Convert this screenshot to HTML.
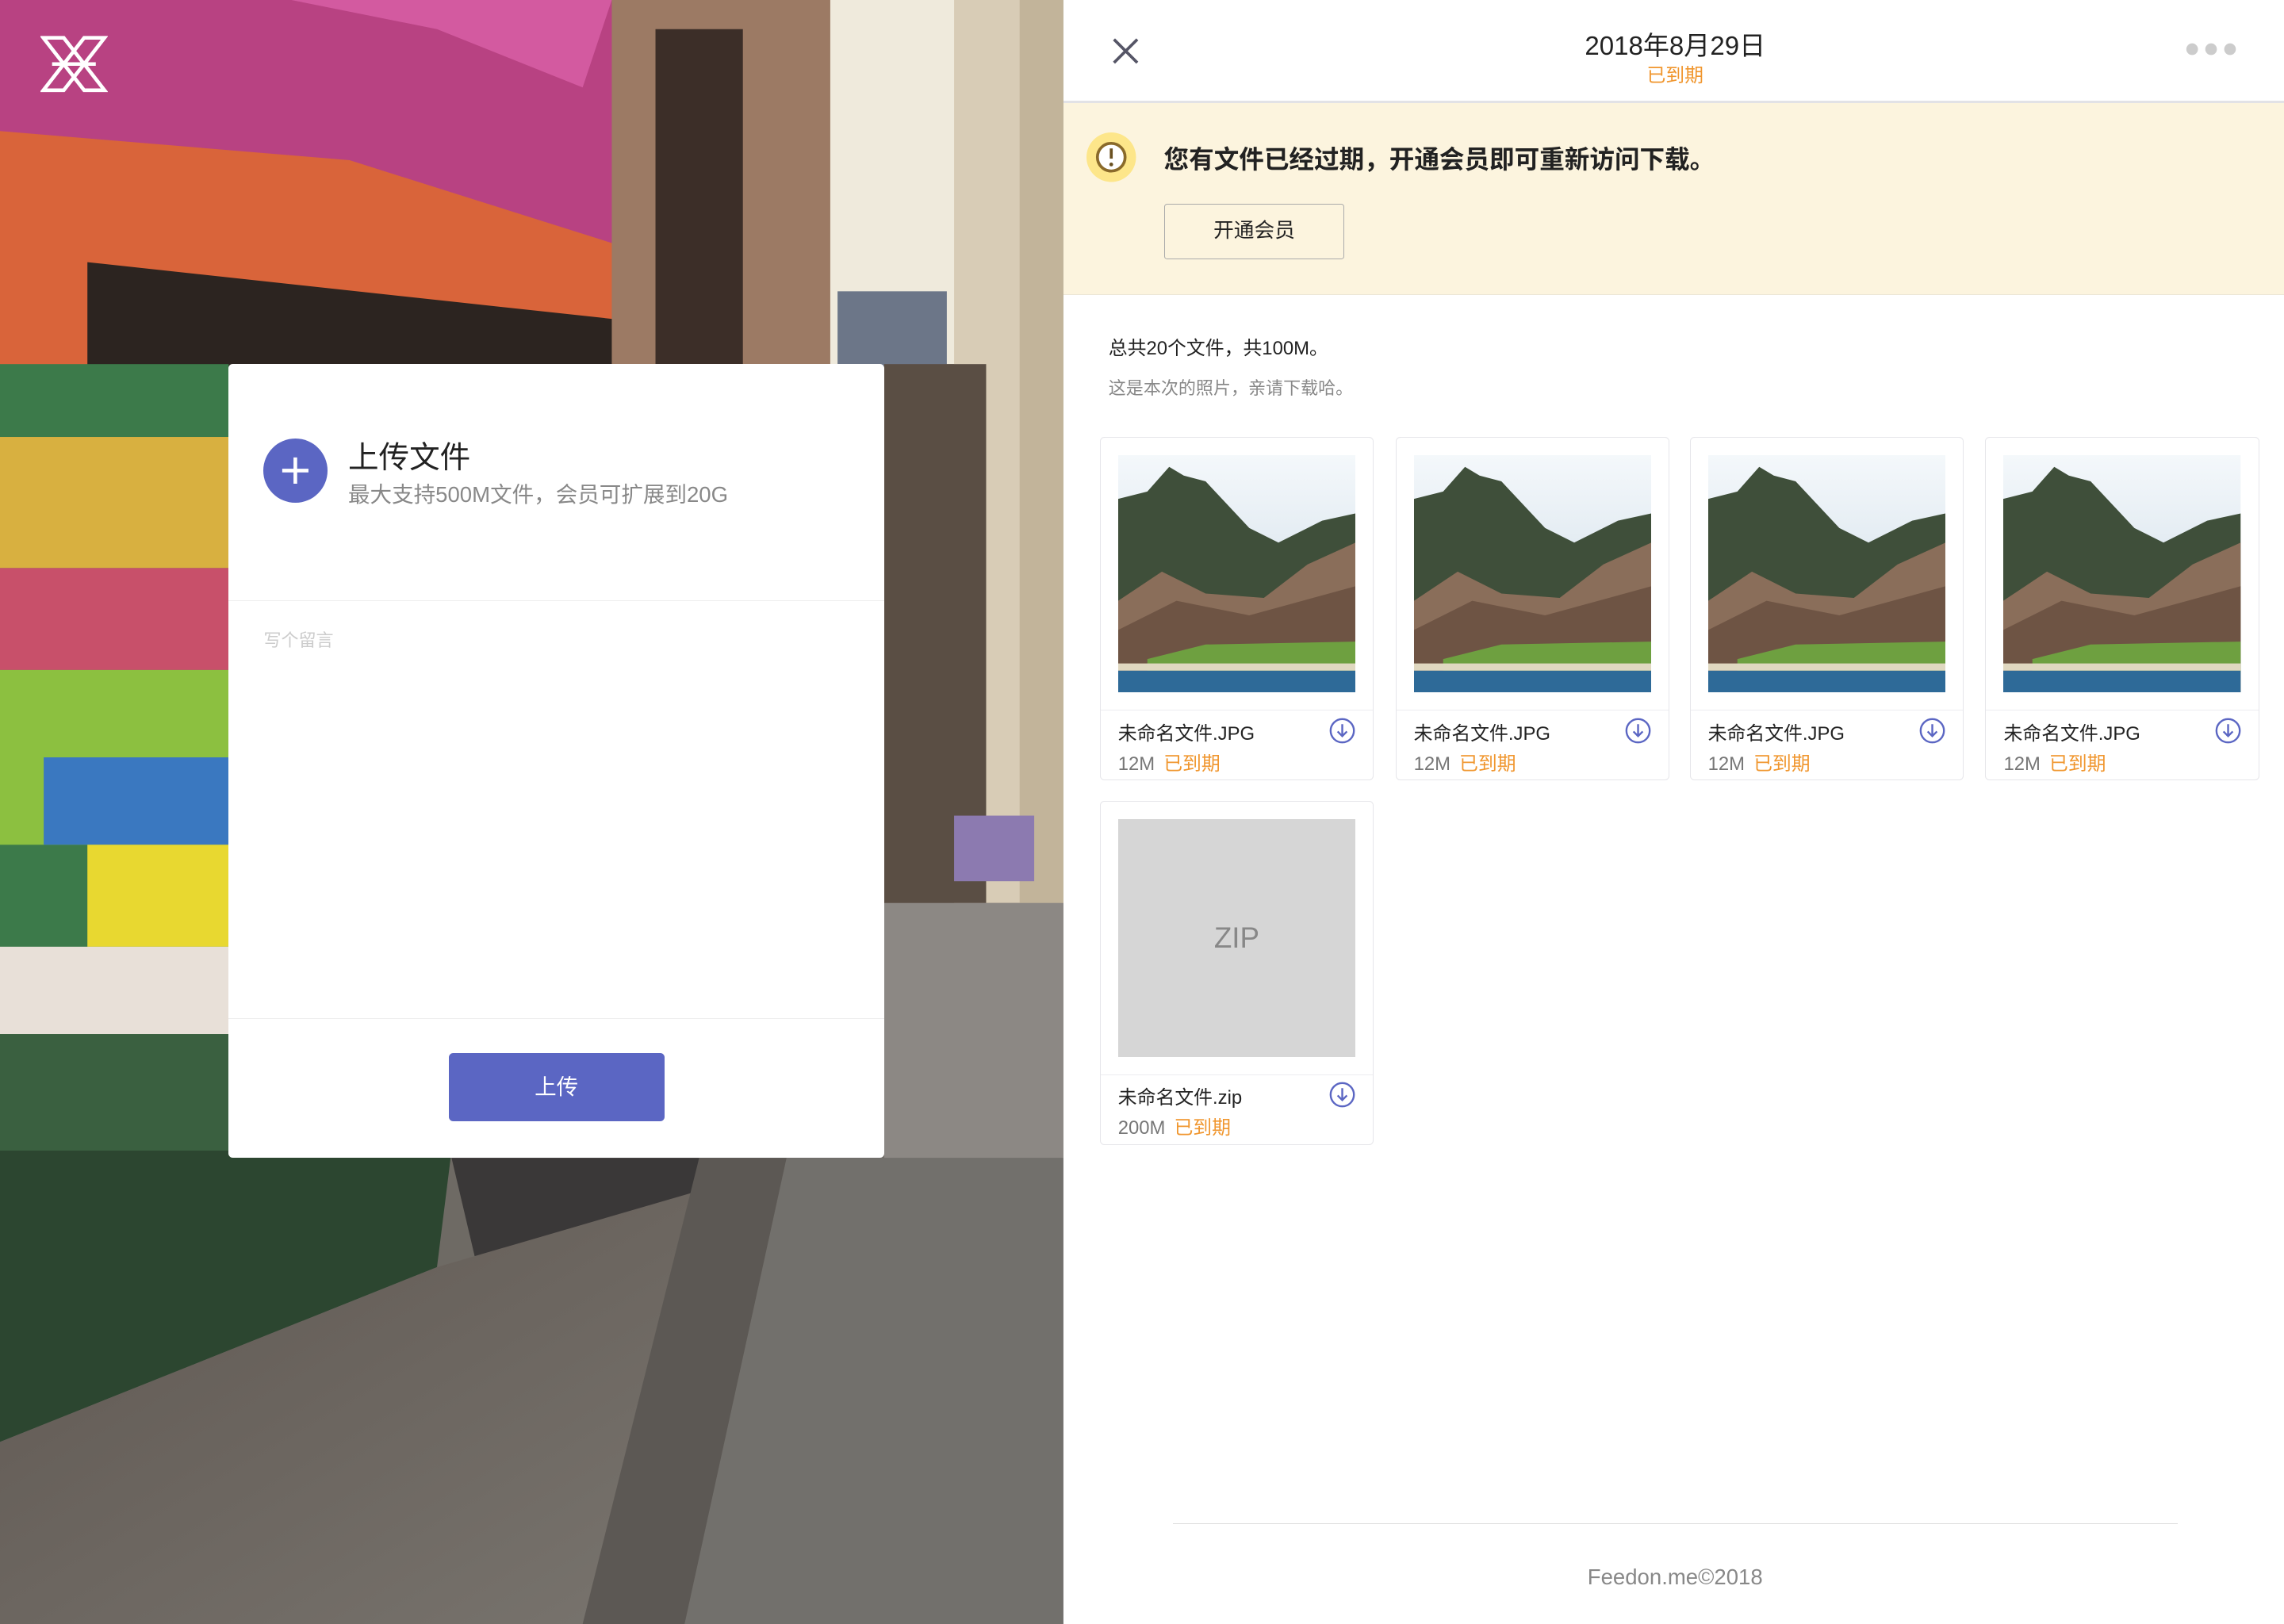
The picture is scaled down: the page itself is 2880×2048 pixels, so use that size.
<!DOCTYPE html>
<html><head><meta charset="utf-8">
<style>
html,body{margin:0;padding:0;width:2880px;height:2048px;overflow:hidden;background:#fff}
#w{zoom:1.83673;width:1568px;height:1115px;position:relative;font-family:"Liberation Sans","Noto Sans CJK SC",sans-serif;}
.a{position:absolute}
.card{position:absolute;width:188px;height:236px;border:1px solid #e6e6ea;border-radius:3px;background:#fff;box-sizing:border-box}
.card .img{position:absolute;left:12px;top:12px;width:163px;height:163px}
.card .sep{position:absolute;left:0;right:0;top:187px;border-top:1px solid #ececf0}
.card .nm{position:absolute;left:12px;top:192px;font-size:13px;color:#222}
.card .sz{position:absolute;left:12px;top:213px;font-size:13px;color:#777}
.card .sz span{color:#f0962e;margin-left:6px}
.card .dl{position:absolute;right:12px;top:192px;width:18px;height:18px}
</style></head><body><div id="w">
<svg class="a" style="left:0;top:0" width="730" height="1115" viewBox="0 0 730 1115">
<defs><linearGradient id="st" x1="0" y1="0" x2="1" y2="1"><stop offset="0" stop-color="#5e5650"/><stop offset="1" stop-color="#7a7670"/></linearGradient></defs>
<rect width="730" height="1115" fill="#6e6a64"/>
<rect x="0" y="0" width="440" height="190" fill="#b84282"/>
<path d="M0 0 H420 L400 60 L300 20 L200 0Z" fill="#d35aa0"/>
<path d="M0 90 L240 110 L430 170 L430 260 L0 260Z" fill="#d9643a"/>
<path d="M60 180 L430 220 L430 260 L60 260Z" fill="#2c2420"/>
<rect x="420" y="0" width="160" height="260" fill="#9c7a64"/>
<rect x="450" y="20" width="60" height="240" fill="#3c2e28"/>
<rect x="570" y="0" width="90" height="250" fill="#efeadc"/>
<rect x="575" y="200" width="75" height="55" fill="#6c7688"/>
<rect x="655" y="0" width="75" height="620" fill="#d8ccb6"/>
<rect x="700" y="0" width="30" height="620" fill="#c2b49a"/>
<rect x="607" y="250" width="70" height="370" fill="#5a4e44"/>
<rect x="655" y="560" width="55" height="45" fill="#8c7ab0"/>
<rect x="0" y="250" width="157" height="550" fill="#3c7a4a"/>
<rect x="0" y="300" width="157" height="90" fill="#d8b040"/>
<rect x="0" y="390" width="157" height="70" fill="#c8506a"/>
<rect x="0" y="460" width="157" height="120" fill="#8cc040"/>
<rect x="30" y="520" width="127" height="60" fill="#3a78c0"/>
<rect x="60" y="580" width="97" height="70" fill="#e8d830"/>
<rect x="0" y="650" width="157" height="60" fill="#e8e0d8"/>
<rect x="0" y="710" width="157" height="90" fill="#3a6040"/>
<path d="M0 790 H310 L300 870 L0 990Z" fill="#2c4630"/>
<path d="M310 795 H480 L470 840 L330 880Z" fill="#3a3838"/>
<path d="M0 990 L300 870 L540 800 L420 1115 H0Z" fill="url(#st)"/>
<path d="M480 795 L540 795 L470 1115 L400 1115Z" fill="#5c5854"/>
<rect x="607" y="620" width="123" height="175" fill="#8c8884"/>
<path d="M540 795 H730 V1115 H470Z" fill="#72706c"/>
</svg>
<svg class="a" style="left:28px;top:24px" width="46" height="40" viewBox="0 0 46 40" fill="none" stroke="#fff" stroke-width="2.5"><path d="M2 2 H16 L44 38 H30Z M44 2 H30 L2 38 H16Z"/><path d="M8 20 H38"/></svg>

<div class="a" style="left:157px;top:250px;width:450px;height:545px;background:#fff;border-radius:3px"></div>
<div class="a" style="left:181px;top:301px;width:44px;height:44px;border-radius:50%;background:#5b66c3"></div>
<svg class="a" style="left:181px;top:301px" width="44" height="44"><path d="M22 13V31M13 22H31" stroke="#fff" stroke-width="2.5"/></svg>
<div class="a" style="left:239px;top:297px;font-size:21px;color:#222">上传文件</div>
<div class="a" style="left:239px;top:327px;font-size:15px;color:#888">最大支持500M文件，会员可扩展到20G</div>
<div class="a" style="left:157px;top:412px;width:450px;border-top:1px solid #eee"></div>
<div class="a" style="left:181px;top:430px;font-size:12px;color:#ccc">写个留言</div>
<div class="a" style="left:157px;top:699px;width:450px;border-top:1px solid #eee"></div>
<div class="a" style="left:308px;top:723px;width:148px;height:47px;background:#5b66c3;border-radius:3px;color:#fff;font-size:15px;text-align:center;line-height:47px">上传</div>

<div class="a" style="left:730px;top:0;width:838px;height:1115px;background:#fff"></div>
<svg class="a" style="left:763px;top:25px" width="20" height="20"><path d="M2 2L18 18M18 2L2 18" stroke="#556" stroke-width="2"/></svg>
<div class="a" style="left:1050px;top:17px;width:200px;text-align:center;font-size:18px;color:#222">2018年8月29日</div>
<div class="a" style="left:1050px;top:41px;width:200px;text-align:center;font-size:13px;color:#f0962e">已到期</div>
<svg class="a" style="left:1500px;top:28px" width="38" height="12"><circle cx="5" cy="6" r="4" fill="#ccc"/><circle cx="18" cy="6" r="4" fill="#ccc"/><circle cx="31" cy="6" r="4" fill="#ccc"/></svg>
<div class="a" style="left:730px;top:69px;width:838px;border-top:2px solid #e2e2e6"></div>
<div class="a" style="left:730px;top:71px;width:838px;height:131px;background:#fcf4de;border-bottom:1px solid #ece6d6"></div>
<svg class="a" style="left:746px;top:91px" width="34" height="34"><circle cx="17" cy="17" r="17" fill="#fde68a"/><circle cx="17" cy="17" r="9.5" fill="#fff" stroke="#8a6a2a" stroke-width="2"/><path d="M17 11V18" stroke="#6a5020" stroke-width="2"/><circle cx="17" cy="22" r="1.3" fill="#6a5020"/></svg>
<div class="a" style="left:799px;top:96px;font-size:17.2px;font-weight:bold;color:#222">您有文件已经过期，开通会员即可重新访问下载。</div>
<div class="a" style="left:799px;top:140px;width:123px;height:37px;border:1px solid #aaa;border-radius:2px;text-align:center;line-height:37px;font-size:14px;color:#222">开通会员</div>
<div class="a" style="left:761px;top:228px;font-size:13px;color:#222">总共20个文件，共100M。</div>
<div class="a" style="left:761px;top:257px;font-size:12px;color:#888">这是本次的照片，亲请下载哈。</div>

<svg width="0" height="0" style="position:absolute"><defs>
<linearGradient id="sky" x1="0" y1="0" x2="0" y2="1"><stop offset="0" stop-color="#f4f8fb"/><stop offset="1" stop-color="#c8d8e4"/></linearGradient>
<symbol id="m" viewBox="0 0 163 163">
<rect width="163" height="163" fill="url(#sky)"/>
<path d="M0 30 L20 25 L35 8 L45 14 L60 18 L90 50 L110 60 L140 45 L163 40 V163 H0Z" fill="#3f4f3a"/>
<path d="M0 100 L30 80 L60 95 L100 98 L130 75 L163 60 V163 H0Z" fill="#8a6e5a"/>
<path d="M0 120 L40 100 L90 110 L163 90 V150 H0Z" fill="#6e5444"/>
<path d="M20 140 L60 130 L163 128 V150 H20Z" fill="#6ea040"/>
<rect y="143" width="163" height="5" fill="#e0d8c0"/>
<rect y="148" width="163" height="15" fill="#2e6a98"/>
</symbol>
<symbol id="d" viewBox="0 0 18 18"><circle cx="9" cy="9" r="8" fill="none" stroke="#5b66c3" stroke-width="1.3"/><path d="M9 4.5V12.5M5.8 9.5L9 12.7L12.2 9.5" fill="none" stroke="#5b66c3" stroke-width="1.3"/></symbol>
</defs></svg>

<div class="card" style="left:755px;top:300px"><svg class="img"><use href="#m"/></svg><div class="sep"></div><div class="nm">未命名文件.JPG</div><div class="sz">12M<span>已到期</span></div><svg class="dl"><use href="#d"/></svg></div>
<div class="card" style="left:958px;top:300px"><svg class="img"><use href="#m"/></svg><div class="sep"></div><div class="nm">未命名文件.JPG</div><div class="sz">12M<span>已到期</span></div><svg class="dl"><use href="#d"/></svg></div>
<div class="card" style="left:1160px;top:300px"><svg class="img"><use href="#m"/></svg><div class="sep"></div><div class="nm">未命名文件.JPG</div><div class="sz">12M<span>已到期</span></div><svg class="dl"><use href="#d"/></svg></div>
<div class="card" style="left:1363px;top:300px"><svg class="img"><use href="#m"/></svg><div class="sep"></div><div class="nm">未命名文件.JPG</div><div class="sz">12M<span>已到期</span></div><svg class="dl"><use href="#d"/></svg></div>
<div class="card" style="left:755px;top:550px"><div class="img" style="background:#d6d6d6;color:#888;font-size:20px;text-align:center;line-height:163px">ZIP</div><div class="sep"></div><div class="nm">未命名文件.zip</div><div class="sz">200M<span>已到期</span></div><svg class="dl"><use href="#d"/></svg></div>

<div class="a" style="left:805px;top:1046px;width:690px;border-top:1px solid #ddd"></div>
<div class="a" style="left:1050px;top:1074px;width:200px;text-align:center;font-size:15px;color:#888">Feedon.me©2018</div>
</div></body></html>
